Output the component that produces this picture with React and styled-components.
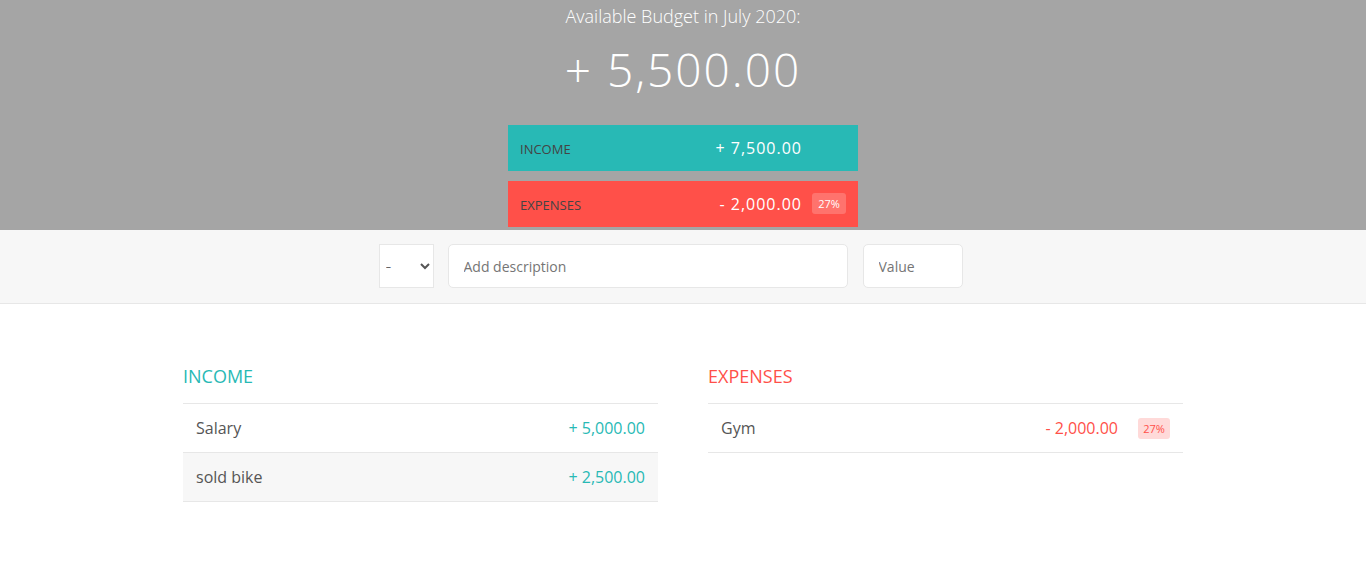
import React from 'react';
import styled, { createGlobalStyle, css } from 'styled-components';

const GlobalStyle = createGlobalStyle`
  * {
    margin: 0;
    padding: 0;
    box-sizing: border-box;
  }
  body {
    color: #555;
    font-family: 'Open Sans', 'Liberation Sans', sans-serif;
    font-size: 16px;
    font-weight: 400;
    background: #fff;
  }
`;

const Top = styled.div`
  height: 40vh;
  background-color: #a5a5a5;
  display: flex;
  align-items: center;
  justify-content: center;
`;

const Budget = styled.div`
  width: 350px;
  color: #fff;
`;

const BudgetTitle = styled.div`
  font-size: 18px;
  text-align: center;
  margin-bottom: 10px;
  font-weight: 300;
`;

const BudgetValue = styled.div`
  font-weight: 300;
  font-size: 46px;
  text-align: center;
  margin-bottom: 25px;
  letter-spacing: 2px;
`;

const SummaryBox = styled.div`
  display: flex;
  align-items: center;
  justify-content: space-between;
  padding: 12px;
  text-transform: uppercase;
  background-color: ${(p) => (p.expense ? '#ff5049' : '#28b9b5')};
  ${(p) =>
    !p.expense &&
    css`
      margin-bottom: 10px;
    `}
`;

const SummaryLabel = styled.div`
  font-size: 13px;
  color: #444;
  margin-top: 2px;
`;

const SummaryRight = styled.div`
  display: flex;
  align-items: center;
`;

const SummaryValue = styled.div`
  letter-spacing: 1px;
`;

const SummaryPercent = styled.div`
  width: 34px;
  font-size: 11px;
  padding: 3px 0;
  margin-left: 10px;
  text-align: center;
  border-radius: 3px;
  ${(p) =>
    p.visible &&
    css`
      background-color: rgba(255, 255, 255, 0.2);
    `}
`;

const AddBar = styled.div`
  padding: 14px 14px 15px;
  border-bottom: 1px solid #e7e7e7;
  background-color: #f7f7f7;
`;

const AddRow = styled.div`
  display: flex;
  justify-content: center;
  align-items: center;
`;

const TypeSelect = styled.select`
  width: 55px;
  height: 44px;
  border: 1px solid #e7e7e7;
  font-size: 18px;
  color: inherit;
  background-color: #fff;
  margin-right: 14px;
  font-weight: 300;
  font-family: inherit;
  padding-left: 2px;
  border-radius: 0;
`;

const Field = styled.input`
  width: ${(p) => p.width}px;
  height: 44px;
  border: 1px solid #e7e7e7;
  background-color: #fff;
  color: inherit;
  font-family: inherit;
  font-size: 14px;
  padding: 12px 15px;
  margin-right: ${(p) => p.gap}px;
  border-radius: 5px;
  outline: none;
  &::placeholder {
    color: #757575;
  }
`;

const AddButton = styled.button`
  width: 10px;
  height: 44px;
  background: none;
  border: none;
`;

const Container = styled.div`
  width: 1000px;
  margin: 60px auto;
  display: flex;
  gap: 50px;
  align-items: flex-start;
`;

const Column = styled.div`
  width: 475px;
`;

const ListTitle = styled.h2`
  text-transform: uppercase;
  font-size: 18px;
  font-weight: 400;
  margin-bottom: 15px;
  color: ${(p) => p.color};
`;

const Item = styled.div`
  display: flex;
  align-items: center;
  justify-content: space-between;
  padding: 13px;
  border-bottom: 1px solid #e7e7e7;
  &:first-of-type {
    border-top: 1px solid #e7e7e7;
  }
  &:nth-of-type(even) {
    background-color: #f7f7f7;
  }
`;

const ItemRight = styled.div`
  display: flex;
  align-items: center;
`;

const ItemValue = styled.div`
  color: ${(p) => p.color};
`;

const ItemPercent = styled.div`
  margin-left: 20px;
  font-size: 11px;
  background-color: #ffdad9;
  padding: 3px;
  border-radius: 3px;
  width: 32px;
  text-align: center;
  color: #ff5049;
`;

const income = [
  { id: 0, description: 'Salary', value: '+ 5,000.00' },
  { id: 1, description: 'sold bike', value: '+ 2,500.00' },
];

const expenses = [{ id: 0, description: 'Gym', value: '- 2,000.00', percent: '27%' }];

export default function App() {
  return (
    <>
      <GlobalStyle />
      <Top>
        <Budget>
          <BudgetTitle>Available Budget in July 2020:</BudgetTitle>
          <BudgetValue>+ 5,500.00</BudgetValue>
          <SummaryBox>
            <SummaryLabel>Income</SummaryLabel>
            <SummaryRight>
              <SummaryValue>+ 7,500.00</SummaryValue>
              <SummaryPercent>&nbsp;</SummaryPercent>
            </SummaryRight>
          </SummaryBox>
          <SummaryBox expense>
            <SummaryLabel>Expenses</SummaryLabel>
            <SummaryRight>
              <SummaryValue>- 2,000.00</SummaryValue>
              <SummaryPercent visible>27%</SummaryPercent>
            </SummaryRight>
          </SummaryBox>
        </Budget>
      </Top>

      <AddBar>
        <AddRow>
          <TypeSelect defaultValue="exp">
            <option value="inc">+</option>
            <option value="exp">-</option>
          </TypeSelect>
          <Field type="text" placeholder="Add description" width={400} gap={15} />
          <Field type="number" placeholder="Value" width={100} gap={15} />
          <AddButton aria-label="Add item" />
        </AddRow>
      </AddBar>

      <Container>
        <Column>
          <ListTitle color="#28b9b5">Income</ListTitle>
          <div>
            {income.map((item) => (
              <Item key={item.id}>
                <div>{item.description}</div>
                <ItemRight>
                  <ItemValue color="#28b9b5">{item.value}</ItemValue>
                </ItemRight>
              </Item>
            ))}
          </div>
        </Column>
        <Column>
          <ListTitle color="#ff5049">Expenses</ListTitle>
          <div>
            {expenses.map((item) => (
              <Item key={item.id}>
                <div>{item.description}</div>
                <ItemRight>
                  <ItemValue color="#ff5049">{item.value}</ItemValue>
                  <ItemPercent>{item.percent}</ItemPercent>
                </ItemRight>
              </Item>
            ))}
          </div>
        </Column>
      </Container>
    </>
  );
}
